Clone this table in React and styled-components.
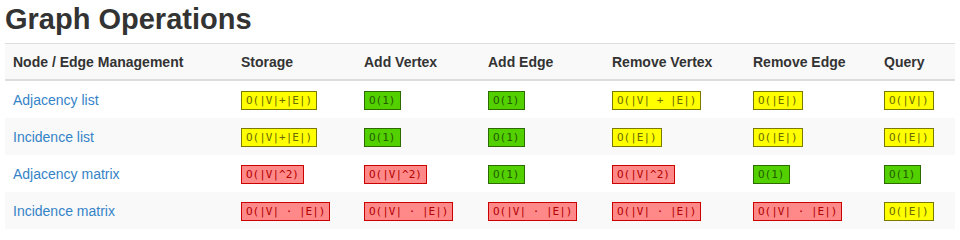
import styled, { createGlobalStyle } from "styled-components";

const GlobalStyle = createGlobalStyle`
  body {
    margin: 0;
    background: #fff;
    font-family: "Liberation Sans", Arial, sans-serif;
    color: #333;
  }
`;

const Page = styled.div`
  padding: 3px 5px 0;
`;

const Title = styled.h1`
  margin: 0 0 7px;
  font-size: 29px;
  line-height: 33px;
  font-weight: 700;
  color: #333;
`;

const Table = styled.table`
  width: 950px;
  table-layout: fixed;
  border-collapse: collapse;
  border-spacing: 0;
  font-size: 14px;
  line-height: 20px;
`;

const HeadCell = styled.th`
  text-align: left;
  font-weight: 700;
  padding: 8px 8px 7px;
  background: #f9f9f9;
  border-top: 1px solid #ddd;
  border-bottom: 2px solid #ddd;
  white-space: nowrap;
`;

const Row = styled.tr`
  background: ${(props) => (props.$striped ? "#f9f9f9" : "#fff")};
  & + & > td {
    border-top: 1px solid #ddd;
  }
`;

const Cell = styled.td`
  padding: 8px;
  vertical-align: middle;
`;

const Link = styled.a`
  color: #3583c7;
  text-decoration: none;
`;

const colors = {
  green: { bg: "#53d000", border: "#2d6b00", text: "#245c00" },
  yellow: { bg: "#ffff00", border: "#7a7a00", text: "#6b6b00" },
  red: { bg: "#ff8989", border: "#cc0000", text: "#b30000" },
};

const Big = styled.code`
  display: inline-block;
  font-family: "DejaVu Sans Mono", monospace;
  font-size: 11px;
  line-height: 15px;
  padding: 1px 4px;
  white-space: pre;
  background: ${(props) => colors[props.$tone].bg};
  border: 1px solid ${(props) => colors[props.$tone].border};
  color: ${(props) => colors[props.$tone].text};
`;

const widths = [228, 123, 124, 124, 141, 131, 79];

const headers = [
  "Node / Edge Management",
  "Storage",
  "Add Vertex",
  "Add Edge",
  "Remove Vertex",
  "Remove Edge",
  "Query",
];

const rows = [
  {
    name: "Adjacency list",
    cells: [
      ["yellow", "O(|V|+|E|)"],
      ["green", "O(1)"],
      ["green", "O(1)"],
      ["yellow", "O(|V| + |E|)"],
      ["yellow", "O(|E|)"],
      ["yellow", "O(|V|)"],
    ],
  },
  {
    name: "Incidence list",
    cells: [
      ["yellow", "O(|V|+|E|)"],
      ["green", "O(1)"],
      ["green", "O(1)"],
      ["yellow", "O(|E|)"],
      ["yellow", "O(|E|)"],
      ["yellow", "O(|E|)"],
    ],
  },
  {
    name: "Adjacency matrix",
    cells: [
      ["red", "O(|V|^2)"],
      ["red", "O(|V|^2)"],
      ["green", "O(1)"],
      ["red", "O(|V|^2)"],
      ["green", "O(1)"],
      ["green", "O(1)"],
    ],
  },
  {
    name: "Incidence matrix",
    cells: [
      ["red", "O(|V| · |E|)"],
      ["red", "O(|V| · |E|)"],
      ["red", "O(|V| · |E|)"],
      ["red", "O(|V| · |E|)"],
      ["red", "O(|V| · |E|)"],
      ["yellow", "O(|E|)"],
    ],
  },
];

const App = () => {
  return (
    <Page>
      <GlobalStyle />
      <Title>Graph Operations</Title>
      <Table>
        <colgroup>
          {widths.map((w, i) => (
            <col key={i} style={{ width: w }} />
          ))}
        </colgroup>
        <thead>
          <tr>
            {headers.map((h) => (
              <HeadCell key={h}>{h}</HeadCell>
            ))}
          </tr>
        </thead>
        <tbody>
          {rows.map((row, i) => (
            <Row key={row.name} $striped={i % 2 === 1}>
              <Cell>
                <Link href="#">{row.name}</Link>
              </Cell>
              {row.cells.map(([tone, text], j) => (
                <Cell key={j}>
                  <Big $tone={tone}>{text}</Big>
                </Cell>
              ))}
            </Row>
          ))}
        </tbody>
      </Table>
    </Page>
  );
};

export default App;
